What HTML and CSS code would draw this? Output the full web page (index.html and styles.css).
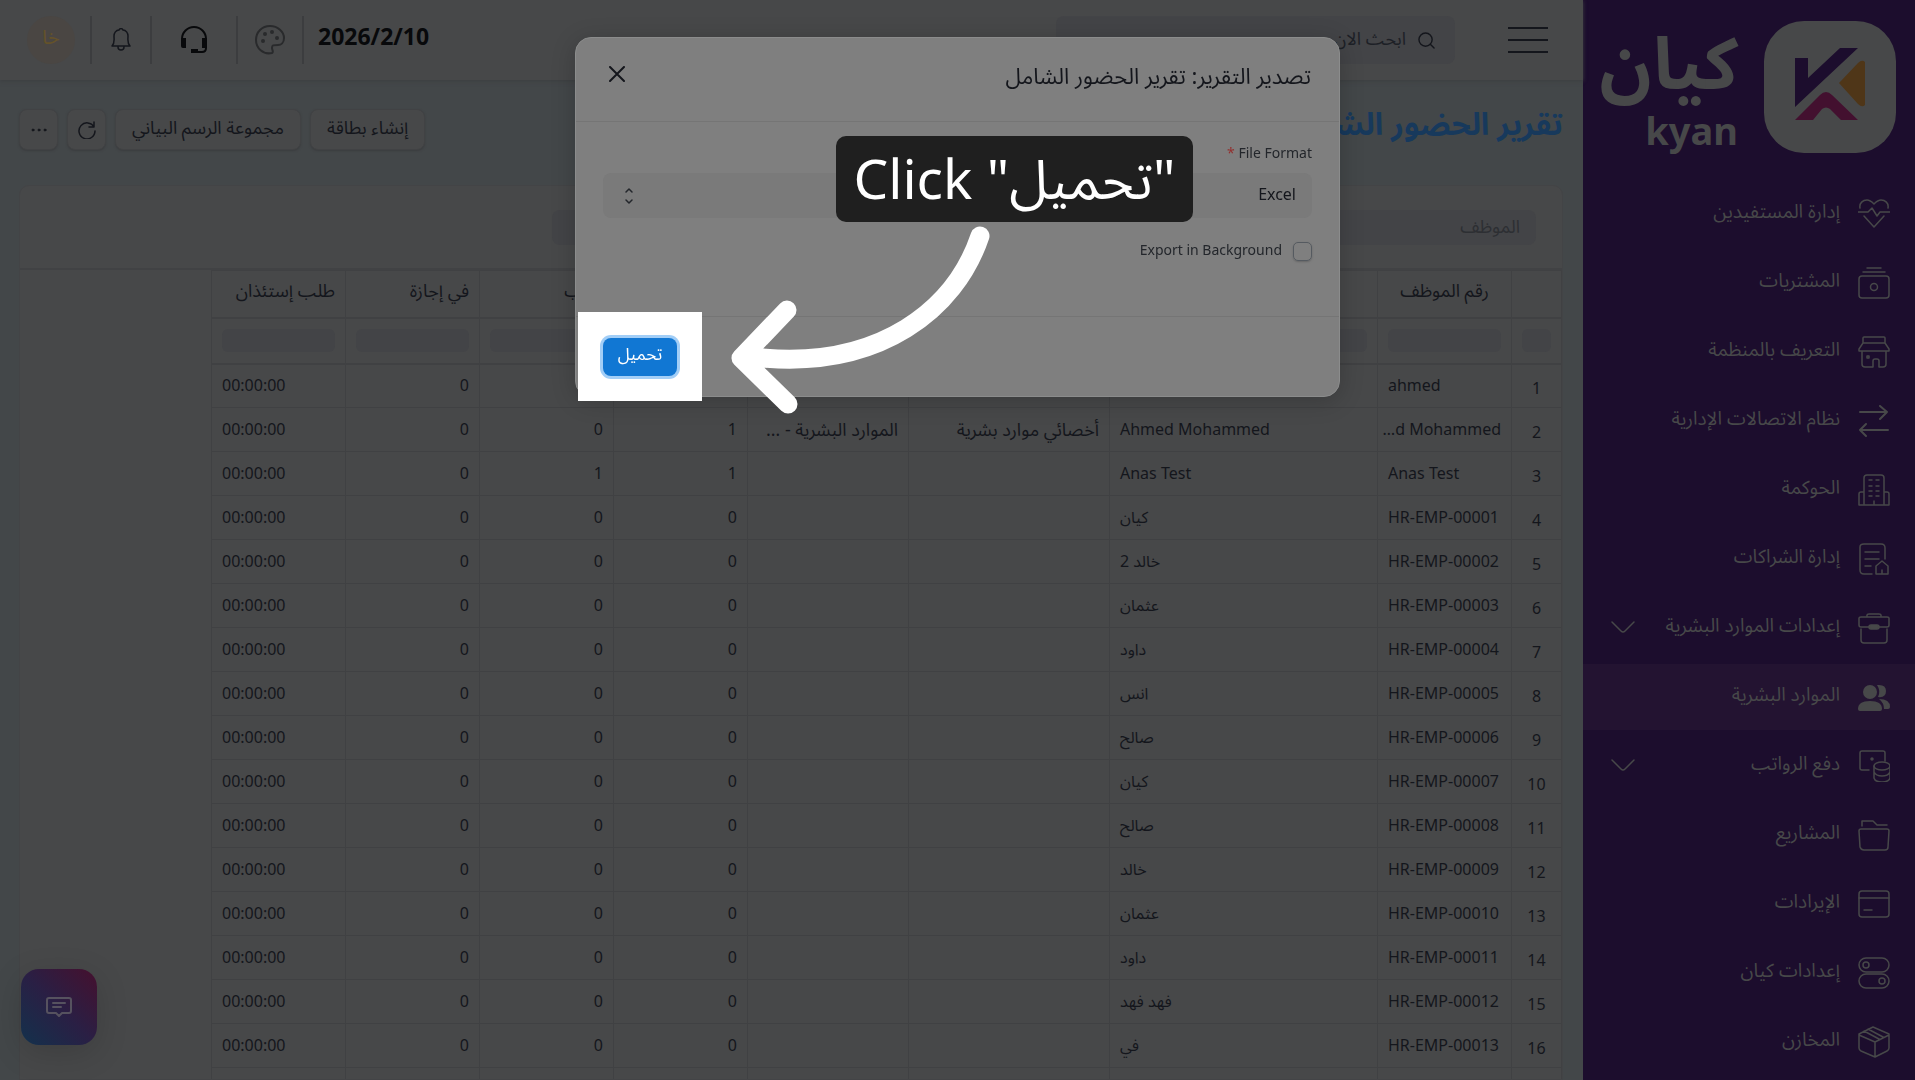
FILE: index.html
```html
<!DOCTYPE html>
<html lang="ar" dir="rtl">
<head>
    <meta charset="UTF-8">
    <meta name="viewport" content="width=device-width, initial-scale=1.0">
    <title>تقرير الحضور الشامل</title>
    <link rel="stylesheet" href="styles.css">
</head>
<body>

    <aside class="sidebar">
        <a class="brand" href="#">
            <svg class="brand-mark" viewBox="0 0 132 132" aria-hidden="true">
                <rect width="132" height="132" rx="40" fill="#474849"/>
                <path d="M31 37H44V57L76 27H94L31 86Z" fill="#1c0d2d"/>
                <path d="M75 62 94 42Q98 38 101 41V84Q98 87 94 83Z" fill="#4f3618"/>
                <path d="M31 99 56 74Q62 68 68 74L94 99H77L66 88Q62 85 58 88L49 99Z" fill="#43102f"/>
            </svg>
            <span class="brand-text">
                <span class="brand-ar">كيان</span>
                <span class="brand-en">kyan</span>
            </span>
        </a>
        <nav class="menu">
            <a href="#" class="menu-item">
                <svg class="icon" viewBox="0 0 32 32"><path d="M2 10C1 5 5 2 9 2c3 0 5 2 7 4 2-2 4-4 7-4 4 0 8 3 7 8M0 14h10l4-4 5 8 3-4h10M6 18l10 11 10-11"/></svg>
                <span>إدارة المستفيدين</span>
            </a>
            <a href="#" class="menu-item">
                <svg class="icon" viewBox="0 0 32 32"><rect x="1" y="9" width="30" height="22" rx="3"/><circle cx="16" cy="20" r="3.500"/><path d="M9 1h14M5 5h22"/></svg>
                <span>المشتريات</span>
            </a>
            <a href="#" class="menu-item">
                <svg class="icon" viewBox="0 0 32 32"><path d="M5 7V2q0-1 1-1h20q1 0 1 1v5M5 7h22l4 6v2H1v-2ZM4 15v13q0 3 3 3h8v-6q0-2 2-2h2q2 0 2 2v6h4q3 0 3-3V15"/><rect x="9" y="20" width="2" height="2"/></svg>
                <span>التعريف بالمنظمة</span>
            </a>
            <a href="#" class="menu-item">
                <svg class="icon icon-bold" viewBox="0 0 32 32"><path d="M2 7h27M22 1l7 6-7 7M30 25H2M8 19l-6 6 6 6"/></svg>
                <span>نظام الاتصالات الإدارية</span>
            </a>
            <a href="#" class="menu-item">
                <svg class="icon" viewBox="0 0 32 32"><path d="M6 31V4q0-3 3-3h14q3 0 3 3v27M6 18H3q-2 0-2 2v11h30V20q0-2-2-2h-3M16 27v4M11 6h3M18 6h3M11 12h3M18 12h3M11 17h3M18 17h3M11 22h3M18 22h3"/></svg>
                <span>الحوكمة</span>
            </a>
            <a href="#" class="menu-item">
                <svg class="icon" viewBox="0 0 32 32"><path d="M14 31H6q-4 0-4-4V4q0-3 4-3h17q4 0 4 4v11M7 9h14M7 16h14M7 23h6M18 31v-8l6-5 6 5v8ZM24 27v4"/></svg>
                <span>إدارة الشراكات</span>
            </a>
            <a href="#" class="menu-item">
                <svg class="icon" viewBox="0 0 32 32"><path d="M11 15H3q-2 0-2-2V6q0-1 2-1h26q2 0 2 1v7q0 2-2 2h-8M9 5V3q0-1 2-1h10q2 0 2 1v2M3 17v11q0 3 3 3h20q3 0 3-3V17"/><rect x="11" y="13" width="10" height="4" rx="2" fill="currentColor"/></svg>
                <span>إعدادات الموارد البشرية</span>
                <svg class="chevron" viewBox="0 0 24 14"><path d="M1 1l9 9q2 2 4 0l9-9"/></svg>
            </a>
            <a href="#" class="menu-item active">
                <svg class="icon icon-fill" viewBox="0 0 32 32"><circle cx="12" cy="11" r="7"/><path d="M0 28q0-8 12-8t12 8q0 2-2 2H2q-2 0-2-2ZM19 4q9-1 9 6t-8 6q3-6-1-12ZM21 18q11 0 11 8 0 2-2 2h-4q0-6-5-10Z"/></svg>
                <span>الموارد البشرية</span>
            </a>
            <a href="#" class="menu-item">
                <svg class="icon" viewBox="0 0 32 32"><path d="M11 20H4q-2 0-2-2V3q0-2 2-2h21q2 0 2 2v8"/><circle cx="14" cy="9" r="1" fill="currentColor"/><ellipse cx="24" cy="16" rx="8" ry="4"/><path d="M16 16v12q1 4 8 4t8-4V16M16 22q2 4 8 4t8-4"/></svg>
                <span>دفع الرواتب</span>
                <svg class="chevron" viewBox="0 0 24 14"><path d="M1 1l9 9q2 2 4 0l9-9"/></svg>
            </a>
            <a href="#" class="menu-item">
                <svg class="icon" viewBox="0 0 32 32"><path d="M4 7V2h11l4 4h10M3 10h26q2 0 2 2l-1 16q0 3-3 3H6q-3 0-4-3L1 12q0-2 2-2Z"/></svg>
                <span>المشاريع</span>
            </a>
            <a href="#" class="menu-item">
                <svg class="icon" viewBox="0 0 32 32"><rect x="1" y="3" width="30" height="26" rx="3"/><path d="M1 10h30M6 22h8"/></svg>
                <span>الإيرادات</span>
            </a>
            <a href="#" class="menu-item">
                <svg class="icon" viewBox="0 0 32 32"><rect x="1" y="1" width="30" height="14" rx="7"/><rect x="1" y="17" width="30" height="14" rx="7"/><circle cx="8" cy="8" r="3"/><circle cx="24" cy="24" r="3"/></svg>
                <span>إعدادات كيان</span>
            </a>
            <a href="#" class="menu-item">
                <svg class="icon" viewBox="0 0 32 32"><path d="M1 8 15 1l16 7v14q0 2-2 3l-12 6-14-6q-2-1-2-3ZM1 9l16 7 14-7M17 16v15M6 5l15 8M10 3l15 8"/></svg>
                <span>المخازن</span>
            </a>
        </nav>
    </aside>

    <main class="main">
        <header class="topbar">
            <button class="burger" aria-label="القائمة"><i></i><i></i><i></i></button>
            <label class="search">
                <svg viewBox="0 0 18 18" aria-hidden="true"><circle cx="8" cy="8" r="7"/><path d="M13 13l4 4"/></svg>
                <input type="search" placeholder="ابحث الان">
            </label>
            <div class="tools">
                <strong class="date" dir="ltr">2026/2/10</strong>
                <button class="tool tool-palette" aria-label="السمة">
                    <svg viewBox="0 0 30 30"><path d="M17 28C8 30 1 23 1 15S7 1 15 1s14 6 14 12c0 5-3 7-6 7-5 0-6 0-6 3 0 2 2 4 0 5Z"/><g fill="currentColor"><circle cx="8" cy="16" r="1"/><circle cx="10" cy="9" r="1"/><circle cx="17" cy="7" r="1"/><circle cx="22" cy="13" r="1"/></g></svg>
                </button>
                <button class="tool tool-support" aria-label="الدعم">
                    <svg viewBox="0 0 28 28"><path d="M2 15v-2a12 12 0 0 1 24 0v9q0 4-4 4h-9"/><path class="solid" d="M1 12h5v10H3q-2 0-2-2ZM27 12h-5v10h3q2 0 2-2ZM11 23h7v4h-7Z"/></svg>
                </button>
                <button class="tool tool-bell" aria-label="الإشعارات">
                    <svg viewBox="0 0 20 24"><path d="M1 18c3-3 2-6 2-10 0-3 2-6 5-6q2-3 4 0c3 0 5 3 5 6 0 4-1 7 2 10ZM7 19q0 3 3 3t3-3"/></svg>
                </button>
                <button class="avatar">خا</button>
            </div>
        </header>

        <section class="page-head">
            <h1>تقرير الحضور الشامل</h1>
            <div class="actions">
                <button class="btn">إنشاء بطاقة</button>
                <button class="btn">مجموعة الرسم البياني</button>
                <button class="btn btn-icon" aria-label="تحديث">
                    <svg viewBox="0 0 18 18"><path d="M16 6a8 8 0 1 0 1 4M16 1v5h-5"/></svg>
                </button>
                <button class="btn btn-icon" aria-label="المزيد">
                    <svg class="dots" viewBox="0 0 18 18"><circle cx="3" cy="9" r="1"/><circle cx="9" cy="9" r="1"/><circle cx="15" cy="9" r="1"/></svg>
                </button>
            </div>
        </section>

        <section class="report">
            <div class="filters">
                <input type="text" placeholder="الموظف" aria-label="الموظف">
            </div>
            <table class="grid">
                <colgroup>
                    <col class="col-index"><col class="col-std"><col class="col-name"><col class="col-job"><col class="col-dept"><col class="col-std"><col class="col-std"><col class="col-std"><col class="col-std">
                </colgroup>
                <thead>
                    <tr><th></th><th class="center">رقم الموظف</th><th class="center">الاسم</th><th>المسمى الوظيفي</th><th>القسم</th><th>حاضر</th><th>غائب</th><th>في إجازة</th><th>طلب إستئذان</th></tr>
                    <tr class="filter-row">
                        <td><input aria-label="تصفية التسلسل"></td>
                        <td><input aria-label="تصفية رقم الموظف"></td>
                        <td><input aria-label="تصفية الاسم"></td>
                        <td><input aria-label="تصفية المسمى"></td>
                        <td><input aria-label="تصفية القسم"></td>
                        <td><input aria-label="تصفية حاضر"></td>
                        <td><input aria-label="تصفية غائب"></td>
                        <td><input aria-label="تصفية في إجازة"></td>
                        <td><input aria-label="تصفية طلب إستئذان"></td>
                    </tr>
                </thead>
                <tbody>
                    <tr><td>1</td><td>ahmed</td><td>ahmed</td><td></td><td></td><td>0</td><td>0</td><td>0</td><td>00:00:00</td></tr>
                    <tr><td>2</td><td><bdi dir="ltr">…d Mohammed</bdi></td><td>Ahmed Mohammed</td><td>أخصائي موارد بشرية</td><td>الموارد البشرية - …</td><td>1</td><td>0</td><td>0</td><td>00:00:00</td></tr>
                    <tr><td>3</td><td>Anas Test</td><td>Anas Test</td><td></td><td></td><td>1</td><td>1</td><td>0</td><td>00:00:00</td></tr>
                    <tr><td>4</td><td>HR-EMP-00001</td><td>كيان</td><td></td><td></td><td>0</td><td>0</td><td>0</td><td>00:00:00</td></tr>
                    <tr><td>5</td><td>HR-EMP-00002</td><td>خالد 2</td><td></td><td></td><td>0</td><td>0</td><td>0</td><td>00:00:00</td></tr>
                    <tr><td>6</td><td>HR-EMP-00003</td><td>عثمان</td><td></td><td></td><td>0</td><td>0</td><td>0</td><td>00:00:00</td></tr>
                    <tr><td>7</td><td>HR-EMP-00004</td><td>داود</td><td></td><td></td><td>0</td><td>0</td><td>0</td><td>00:00:00</td></tr>
                    <tr><td>8</td><td>HR-EMP-00005</td><td>انس</td><td></td><td></td><td>0</td><td>0</td><td>0</td><td>00:00:00</td></tr>
                    <tr><td>9</td><td>HR-EMP-00006</td><td>صالح</td><td></td><td></td><td>0</td><td>0</td><td>0</td><td>00:00:00</td></tr>
                    <tr><td>10</td><td>HR-EMP-00007</td><td>كيان</td><td></td><td></td><td>0</td><td>0</td><td>0</td><td>00:00:00</td></tr>
                    <tr><td>11</td><td>HR-EMP-00008</td><td>صالح</td><td></td><td></td><td>0</td><td>0</td><td>0</td><td>00:00:00</td></tr>
                    <tr><td>12</td><td>HR-EMP-00009</td><td>خالد</td><td></td><td></td><td>0</td><td>0</td><td>0</td><td>00:00:00</td></tr>
                    <tr><td>13</td><td>HR-EMP-00010</td><td>عثمان</td><td></td><td></td><td>0</td><td>0</td><td>0</td><td>00:00:00</td></tr>
                    <tr><td>14</td><td>HR-EMP-00011</td><td>داود</td><td></td><td></td><td>0</td><td>0</td><td>0</td><td>00:00:00</td></tr>
                    <tr><td>15</td><td>HR-EMP-00012</td><td>فهد فهد</td><td></td><td></td><td>0</td><td>0</td><td>0</td><td>00:00:00</td></tr>
                    <tr><td>16</td><td>HR-EMP-00013</td><td>في</td><td></td><td></td><td>0</td><td>0</td><td>0</td><td>00:00:00</td></tr>
                    <tr><td></td><td></td><td></td><td></td><td></td><td></td><td></td><td></td><td></td></tr>
                </tbody>
            </table>
        </section>
    </main>

    <button class="chat" aria-label="المحادثة">
        <svg viewBox="0 0 26 20"><path d="M3 1h20q2 0 2 2v11q0 2-2 2h-7l-3 3-3-3H3q-2 0-2-2V3q0-2 2-2ZM7 6h12M7 10h8"/></svg>
    </button>

    <div class="modal-wrap">
        <div class="modal" role="dialog" aria-labelledby="modalTitle">
            <div class="modal-header">
                <h2 id="modalTitle">تصدير التقرير: تقرير الحضور الشامل</h2>
                <button class="close" aria-label="إغلاق">
                    <svg viewBox="0 0 16 16"><path d="M1 1l14 14M15 1L1 15"/></svg>
                </button>
            </div>
            <div class="modal-body">
                <label class="field-label" for="fileFormat">File Format <span class="required">*</span></label>
                <div class="select">
                    <select id="fileFormat">
                        <option>Excel</option>
                        <option>CSV</option>
                    </select>
                    <svg viewBox="0 0 10 18" aria-hidden="true"><path d="M2 5l3-3 3 3M2 13l3 3 3-3"/></svg>
                </div>
                <label class="check"><input type="checkbox"> Export in Background</label>
            </div>
            <div class="modal-footer">
                <div class="spotlight"><button class="btn-primary">تحميل</button></div>
            </div>

            <div class="callout" dir="ltr">Click "تحميل"</div>
            <svg class="arrow" viewBox="0 0 260 190" aria-hidden="true">
                <path d="M249 10C224 84 149 142 32 132M56 84L10 132l47 46"/>
            </svg>
        </div>
    </div>

</body>
</html>
```

FILE: styles.css
```css
* { box-sizing: border-box; }
body {
    margin: 0;
    display: flex;
    height: 100vh;
    overflow: hidden;
    background-color: #434749;
    color: #14161c;
    font-family: "Noto Sans", "Noto Sans Arabic", "DejaVu Sans", sans-serif;
    font-size: 16px;
    line-height: 24px;
}
button, input, select { font: inherit; color: inherit; border: 0; background: none; padding: 0; }
a { color: inherit; text-decoration: none; }
svg { fill: none; stroke: currentColor; stroke-width: 2; stroke-linecap: round; stroke-linejoin: round; flex: none; }

/* Sidebar */
.sidebar {
    flex: 0 0 332px;
    min-width: 0;
    background-color: #1c0d2d;
    color: #474849;
}
.brand {
    display: flex;
    gap: 26px;
    height: 181px;
    padding: 21px 19px 0;
}
.brand-mark { width: 132px; height: 132px; stroke: none; }
.brand-text { display: flex; flex-direction: column; font-weight: bold; }
.brand-ar { font-size: 72px; line-height: 80px; }
.brand-en { font-size: 38px; line-height: 58px; }
.menu { display: flex; flex-direction: column; gap: 3px; }
.menu-item {
    display: flex;
    align-items: center;
    gap: 18px;
    height: 66px;
    padding: 0 25px 0 28px;
}
.menu-item.active { background-color: #231331; }
.menu-item span { padding-bottom: 6px; font-size: 19px; white-space: nowrap; }
.icon { width: 32px; height: 32px; stroke-width: 1.500; }
.icon-bold { stroke-width: 2; }
.icon-fill { fill: currentColor; stroke: none; }
.chevron { width: 24px; height: 14px; margin-right: auto; stroke-width: 1.500; }

/* Top bar */
.main { flex: 1; min-width: 0; display: flex; flex-direction: column; }
.topbar {
    display: flex;
    align-items: center;
    height: 80px;
    flex: none;
    padding: 0 35px 0 27px;
    background-color: #474849;
    box-shadow: 0 1px 4px #3c3e40;
}
.burger { display: flex; flex-direction: column; gap: 10px; width: 40px; }
.burger i { height: 2px; background-color: #14161c; }
.search {
    display: flex;
    align-items: center;
    gap: 12px;
    width: 399px;
    height: 48px;
    margin-right: 53px;
    padding: 0 20px;
    border-radius: 8px;
    background-color: #434447;
}
.search svg { width: 17px; height: 17px; stroke-width: 1.500; }
.search input { flex: 1; min-width: 0; outline: none; padding-bottom: 4px; font-size: 18px; }
.search input::placeholder { color: #1d2026; opacity: 1; }
.tools { display: flex; align-items: center; height: 48px; margin-right: auto; }
.date { padding: 0 14px 8px; color: #08090b; font-size: 23px; }
.tool {
    display: flex;
    align-items: center;
    justify-content: center;
    height: 48px;
    border-right: 2px solid #3c3d3f;
}
.tool-palette { width: 66px; color: #292a2c; }
.tool-palette svg { width: 30px; height: 30px; }
.tool-support { width: 86px; color: #08090b; }
.tool-support svg { width: 28px; height: 28px; }
.tool-support .solid { fill: currentColor; stroke: none; }
.tool-bell { width: 62px; border-left: 2px solid #3c3d3f; }
.tool-bell svg { width: 20px; height: 24px; stroke-width: 1.500; }
.avatar {
    width: 48px;
    height: 48px;
    margin-right: 15px;
    padding-bottom: 6px;
    border-radius: 50%;
    background-color: #4a4643;
    color: #64522a;
    font-size: 20px;
}

/* Report title and actions */
.page-head {
    display: flex;
    justify-content: space-between;
    height: 105px;
    flex: none;
    padding: 29px 20px 0 19px;
}
h1 { margin: 0; font-size: 31px; line-height: 28px; color: #17395c; }
.actions { display: flex; gap: 9px; height: 41px; }
.btn {
    padding: 0 16px 6px;
    border: 1px solid #414244;
    border-radius: 8px;
    background-color: #474849;
    box-shadow: 0 1px 2px #3b3d3f;
    font-size: 18px;
}
.btn-icon { display: flex; align-items: center; justify-content: center; width: 39px; padding: 0; }
.btn-icon svg { width: 18px; height: 18px; stroke-width: 1.500; }
.btn-icon .dots { fill: currentColor; stroke-width: 1; }

/* Report table */
.report {
    flex: 1;
    min-height: 0;
    overflow: hidden;
    margin: 0 20px 0 19px;
    border: 1px solid #434446;
    border-radius: 10px 10px 0 0;
    background-color: #474849;
}
.filters { height: 84px; padding: 24px 26px; border-bottom: 2px solid #414244; }
.filters input {
    display: block;
    width: 984px;
    height: 35px;
    padding: 0 16px 4px;
    border-radius: 8px;
    background-color: #434447;
    font-size: 18px;
}
.filters input::placeholder { color: #2d2f33; opacity: 1; }
.grid { width: 1351px; table-layout: fixed; border-collapse: collapse; }
.col-index { width: 50px; }
.col-std { width: 134px; }
.col-name { width: 268px; }
.col-job { width: 201px; }
.col-dept { width: 161px; }
.grid th, .grid td {
    height: 44px;
    padding: 0 10px 2px;
    border: 1px solid #404143;
    overflow: hidden;
    white-space: nowrap;
    text-align: right;
    font-weight: normal;
}
.grid th { height: 47px; padding-bottom: 8px; border-bottom-width: 2px; font-size: 18px; }
.grid .center { text-align: center; }
.grid .filter-row td { height: 46px; padding-bottom: 0; border-bottom-width: 2px; }
.filter-row input { display: block; width: 100%; height: 23px; border-radius: 6px; background-color: #434447; }
.grid tbody td:first-child { text-align: center; padding: 4px 0 0; }
.grid tbody td:nth-child(2), .grid tbody td:nth-child(3), .grid tbody td:last-child { text-align: left; }
.grid tbody td:nth-child(4), .grid tbody td:nth-child(5) { font-size: 18px; }

/* Chat launcher */
.chat {
    position: fixed;
    left: 21px;
    bottom: 35px;
    display: flex;
    align-items: center;
    justify-content: center;
    width: 76px;
    height: 76px;
    border-radius: 18px;
    color: #56525f;
    background: linear-gradient(45deg, #13314c, #2a1f44 50%, #45102e);
    box-shadow: 0 8px 32px rgba(0, 0, 0, 0.15);
}
.chat svg { width: 26px; height: 20px; }

/* Export dialog */
.modal-wrap { position: fixed; inset: 0; display: flex; justify-content: center; align-items: flex-start; padding-top: 37px; }
.modal {
    position: relative;
    width: 765px;
    border: 1px solid #8b8c8c;
    border-radius: 16px;
    background-color: #7f7f7f;
    box-shadow: 0 4px 24px rgba(0, 0, 0, 0.2);
}
.modal-header {
    display: flex;
    justify-content: space-between;
    height: 84px;
    padding: 25px 28px;
    border-bottom: 1px solid #757575;
}
h2 { margin: 0; font-size: 22px; line-height: 24px; font-weight: normal; }
.close { display: flex; align-items: center; width: 21px; height: 22px; }
.close svg { width: 16px; height: 16px; }
.modal-body { height: 194px; padding: 19px 27px; color: #23262b; font-size: 14px; }
.field-label { display: block; }
.required { color: #93302f; }
.select {
    display: flex;
    align-items: center;
    height: 45px;
    margin-top: 8px;
    padding-left: 21px;
    border-radius: 8px;
    background-color: #7a7a7a;
}
.select select { flex: 1; height: 45px; padding: 0 16px 4px; appearance: none; color: #14161c; font-size: 16px; }
.select svg { width: 10px; height: 18px; stroke-width: 1.500; }
.check { display: flex; gap: 11px; height: 24px; margin-top: 20px; }
.check input {
    appearance: none;
    width: 19px;
    height: 19px;
    margin: 4px 0 0;
    border: 1px solid #555a60;
    border-radius: 5px;
    box-shadow: 0 1px 2px #666;
}
.modal-footer { display: flex; justify-content: flex-end; height: 80px; padding-left: 2px; border-top: 1px solid #757575; }
.spotlight {
    display: flex;
    align-items: center;
    justify-content: center;
    width: 124px;
    height: 89px;
    margin-top: -5px;
    background-color: #fff;
}
.btn-primary {
    width: 74px;
    height: 38px;
    padding-bottom: 6px;
    border-radius: 8px;
    background-color: #1177d3;
    color: #fff;
    font-size: 17px;
    box-shadow: 0 0 0 3px #a2cef7;
}

/* Step hint over the dialog */
.callout {
    position: absolute;
    top: 98px;
    left: 260px;
    width: 357px;
    height: 86px;
    border-radius: 10px;
    background-color: #1f1f1f;
    color: #fff;
    font-size: 55px;
    line-height: 84px;
    text-align: center;
    white-space: nowrap;
}
.arrow { position: absolute; top: 188px; left: 155px; width: 260px; height: 190px; color: #fff; stroke-width: 19; }
```
